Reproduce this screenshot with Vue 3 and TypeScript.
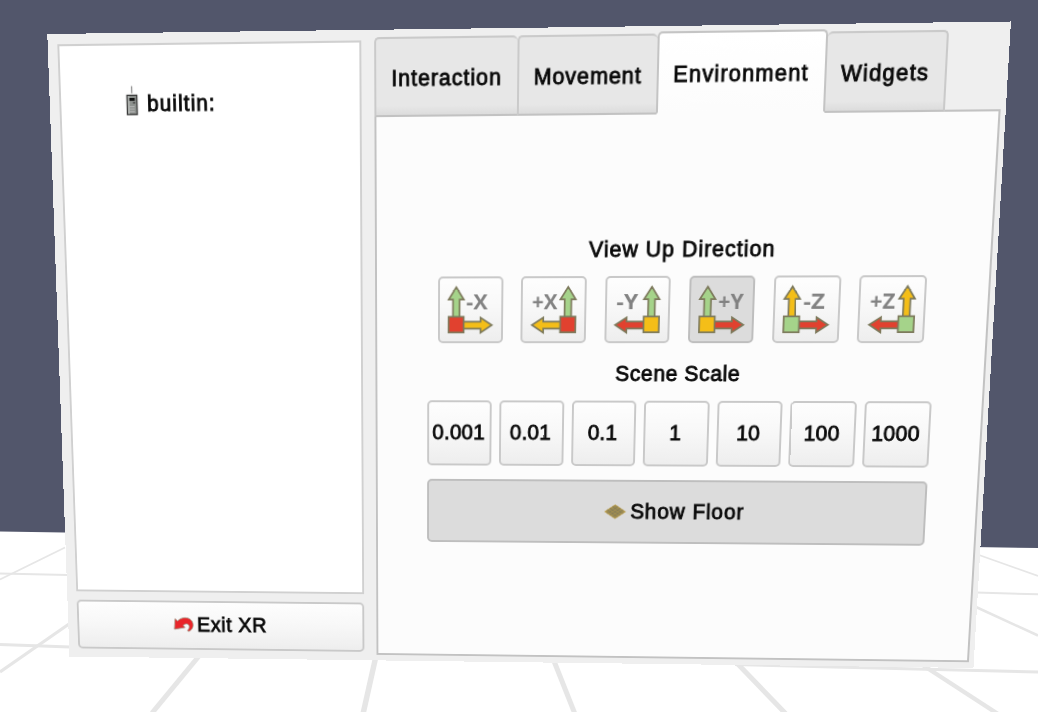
<script setup lang="ts">
import { computed } from 'vue'

type Point = [number, number]

interface Tab {
  name: string
  cls: string
}

interface AxisButton {
  label: string
  up: string
  side: string
  origin: string
  mirrored: boolean
  x: number
  len: number
}

const W = 960
const H = 640

// Projected corners of the floating panel: top-left, top-right, bottom-right, bottom-left
const corners: Point[] = [
  [47.3, 34],
  [1011, 21.5],
  [973.5, 668],
  [69.5, 656.5],
]

const panelStyle = computed(() => {
  const [[x0, y0], [x1, y1], [x2, y2], [x3, y3]] = corners
  const dx1 = x1 - x2
  const dx2 = x3 - x2
  const dx3 = x0 - x1 + x2 - x3
  const dy1 = y1 - y2
  const dy2 = y3 - y2
  const dy3 = y0 - y1 + y2 - y3
  const det = dx1 * dy2 - dx2 * dy1
  const g = (dx3 * dy2 - dx2 * dy3) / det
  const h = (dx1 * dy3 - dx3 * dy1) / det
  const m = [
    (x1 - x0 + g * x1) / W, (y1 - y0 + g * y1) / W, 0, g / W,
    (x3 - x0 + h * x3) / H, (y3 - y0 + h * y3) / H, 0, h / H,
    0, 0, 1, 0,
    x0, y0, 0, 1,
  ]
  return {
    width: `${W}px`,
    height: `${H}px`,
    transform: `matrix3d(${m.map((v) => v.toFixed(9)).join(',')})`,
  }
})

const tabs: Tab[] = [
  { name: 'Interaction', cls: 'interaction' },
  { name: 'Movement', cls: 'movement' },
  { name: 'Environment', cls: 'environment active' },
  { name: 'Widgets', cls: 'widgets' },
]

const red = '#e1412f'
const green = '#a5d38a'
const yellow = '#f4be18'

const axes: AxisButton[] = [
  { label: '-X', up: green, side: yellow, origin: red, mirrored: false, x: 29, len: 22 },
  { label: '+X', up: green, side: yellow, origin: red, mirrored: true, x: 10.5, len: 26 },
  { label: '-Y', up: green, side: red, origin: yellow, mirrored: true, x: 11.5, len: 22 },
  { label: '+Y', up: green, side: red, origin: yellow, mirrored: false, x: 29.5, len: 25.5 },
  { label: '-Z', up: yellow, side: red, origin: green, mirrored: false, x: 30, len: 21.5 },
  { label: '+Z', up: yellow, side: red, origin: green, mirrored: true, x: 10.5, len: 25 },
]
const activeAxis = '+Y'

const scales: string[] = ['0.001', '0.01', '0.1', '1', '10', '100', '1000']
</script>

<template>
  <main class="scene">
    <svg class="floor" viewBox="0 0 1038 712" width="1038" height="712">
      <polygon points="0,531.5 1038,548 1038,712 0,712" fill="#ffffff" />
      <g stroke="#e6e6e6" fill="none">
        <path d="M0 579.5L65 547.5" stroke-width="1.7" />
        <path d="M0 573.5L68 575" stroke-width="2" />
        <path d="M0 644.5L70 647" stroke-width="3" />
        <path d="M0 672L69 624" stroke-width="3.2" />
        <path d="M199 656L152 713" stroke-width="5" />
        <path d="M376 656L363 714" stroke-width="5.5" />
        <path d="M552 656L575 714" stroke-width="5" />
        <path d="M733 659L786 714" stroke-width="5" />
        <path d="M921 664L998 714" stroke-width="4.3" />
        <path d="M735 664.5L1038 672" stroke-width="3" />
        <path d="M976 592.5L1038 594.3" stroke-width="2" />
        <path d="M979 555L1038 576" stroke-width="1.7" />
        <path d="M976 607L1038 635.5" stroke-width="2.5" />
      </g>
    </svg>

    <section class="panel" :style="panelStyle">
      <aside class="left">
        <div class="devices">
          <svg class="device" viewBox="0 0 13 30" width="13" height="30">
            <path d="M6.5 -1.5V5.5" stroke="#8c8c8c" stroke-width="1.3" />
            <rect x="1.4" y="7.4" width="10.2" height="18.8" fill="#8e928f" stroke="#3a3a3a" stroke-width="1.3" />
            <rect x="2.3" y="8.2" width="1.6" height="17.2" fill="#b5b9b6" />
            <rect x="3.8" y="10" width="5.6" height="2.8" fill="#111" />
            <rect x="7.6" y="13.8" width="2" height="1.8" fill="#444" />
            <path d="M4 18.5h5M4 21h5M4 23.5h5" stroke="#b4b4b4" stroke-width="1" />
          </svg>
          <span class="text builtin">builtin:</span>
        </div>
        <button class="btn exit">
          <svg viewBox="0 0 22 18" width="22" height="18">
            <path
              d="M1.9 2.6L4.6 5C7.4 1.8 12.2.6 16.2 1.9C20.4 3.4 22.2 8 20.7 11.8C19.8 14 18.2 15.5 16.2 16.1L15 15.2C17 13.6 17.8 11.2 16.7 9.3C15.4 7.4 12.6 7.4 10.4 9.6L12.4 11.9L.9 13.9Z"
              fill="#e9252a" stroke="#a08c7c" stroke-width="0.9" stroke-linejoin="round"
            />
          </svg>
          <span class="text exit-text">Exit XR</span>
        </button>
      </aside>

      <section class="right">
        <nav class="tabs">
          <button v-for="tab in tabs" :key="tab.name" class="tab" :class="tab.cls">
            <span class="text">{{ tab.name }}</span>
          </button>
        </nav>
        <div class="pane">
          <h2 class="text heading up">View Up Direction</h2>
          <div class="row axes">
            <button
              v-for="axis in axes" :key="axis.label"
              class="btn square" :class="{ pressed: axis.label === activeAxis }"
            >
              <svg viewBox="0 0 66 66" width="66" height="66">
                <g
                  stroke="#7d7a5c" stroke-width="1.7"
                  :transform="axis.mirrored ? 'translate(66 0) scale(-1 1)' : undefined"
                >
                  <path d="M18.7 9.8L26.6 22.2H22.2V40H15.4V22.2H10.9Z" :fill="axis.up" />
                  <path d="M55.4 47.8L43.8 55.4V51.4H26V44.3H43.8V40.2Z" :fill="axis.side" />
                  <rect x="10.9" y="39.4" width="15.6" height="15.8" :fill="axis.origin" />
                </g>
                <text
                  class="axis-label" :x="axis.x" y="32" :textLength="axis.len"
                  lengthAdjust="spacingAndGlyphs"
                >{{ axis.label }}</text>
              </svg>
            </button>
          </div>
          <h2 class="text heading scale">Scene Scale</h2>
          <div class="row scales">
            <button v-for="s in scales" :key="s" class="btn square">
              <span class="text number">{{ s }}</span>
            </button>
          </div>
          <button class="btn pressed show-floor">
            <svg viewBox="0 0 23 16" width="23" height="16">
              <path d="M11.5.8L22.3 8L11.5 15.2L.7 8Z" fill="#a08d50" stroke="#c2a659" stroke-width="0.9" />
              <path
                d="M8.8 2.6L19.6 9.8M6.1 4.4L16.9 11.6M3.4 6.2L14.2 13.4M14.2 2.6L3.4 9.8M16.9 4.4L6.1 11.6M19.6 6.2L8.8 13.4"
                stroke="#77755d" stroke-width="0.8" stroke-dasharray="2 1"
              />
            </svg>
            <span class="text floor-text">Show Floor</span>
          </button>
        </div>
      </section>
    </section>
  </main>
</template>

<style>
html,
body {
  margin: 0;
  overflow: hidden;
}
</style>

<style scoped>
.scene {
  position: relative;
  width: 1038px;
  height: 712px;
  overflow: hidden;
  background: #52566b;
  font-family: "Liberation Sans", Arial, sans-serif;
}

.scene * {
  box-sizing: border-box;
}

svg {
  display: block;
  flex: none;
  overflow: visible;
}

.floor {
  position: absolute;
  inset: 0;
}

.panel {
  position: absolute;
  top: 0;
  left: 0;
  transform-origin: 0 0;
  display: flex;
  gap: 13px;
  padding: 5px 5px 6px 10px;
  background: #efefef;
}

.text {
  color: #0a0a0a;
  font-size: 21.5px;
  line-height: 26px;
  font-weight: 400;
  letter-spacing: 0.9px;
  white-space: nowrap;
  -webkit-text-stroke: 0.85px #0a0a0a;
}

.left {
  width: 311px;
  flex: none;
  display: flex;
  flex-direction: column;
  gap: 9px;
  padding: 5px 0 3px;
}

.devices {
  flex: 1;
  display: flex;
  align-items: flex-start;
  gap: 9px;
  padding: 41px 0 0 67px;
  background: #fff;
  border: 2px solid #d0d0d0;
}

.builtin {
  margin-top: 3px;
  letter-spacing: 1.1px;
}

.btn {
  display: flex;
  align-items: center;
  justify-content: center;
  margin: 0;
  padding: 0;
  font-family: inherit;
  background: linear-gradient(#fefefe, #f8f8f8 45%, #ededed) border-box;
  border: 2px solid #c9c9c9;
  border-radius: 5px;
}

.btn.pressed {
  background: #dcdcdc;
  border-color: #bebebe;
}

.exit {
  height: 53px;
  gap: 4px;
  padding-bottom: 1px;
}

.exit-text {
  letter-spacing: 0.6px;
}

.right {
  flex: 1;
  display: flex;
  flex-direction: column;
}

.tabs {
  display: flex;
  align-items: flex-end;
  height: 79px;
  margin-bottom: -2px;
  z-index: 1;
}

.tab {
  display: flex;
  align-items: center;
  justify-content: center;
  height: 77px;
  margin: 0;
  padding: 3px 0 0;
  font-family: inherit;
  background: linear-gradient(#e7e7e7 88%, #dcdcdc);
  border: 2px solid #cacaca;
  border-bottom-color: #c2c2c2;
  border-radius: 5px 5px 0 0;
}

.interaction {
  width: 144px;
  border-right: 0;
}

.interaction .text {
  letter-spacing: 1px;
}

.movement {
  width: 138.5px;
  border-right: 0;
}

.environment {
  width: 167px;
}

.environment .text {
  letter-spacing: 1.15px;
}

.widgets {
  width: 117px;
  border-left: 0;
}

.widgets .text {
  letter-spacing: 1.2px;
}

.tab.active {
  height: 79px;
  padding-bottom: 1px;
  background: linear-gradient(#ffffff, #fcfcfc);
  border-color: #c4c4c4 #c4c4c4 #fcfcfc;
}

.pane {
  flex: 1;
  display: flex;
  flex-direction: column;
  align-items: center;
  padding: 118px 0 0 2px;
  background: #fcfcfc;
  border: 2px solid #c2c2c2;
}

.heading {
  margin: 0;
}

.up {
  letter-spacing: 1px;
  margin: 0 0 13px 2px;
}

.row {
  display: flex;
}

.axes {
  gap: 18.8px;
}

.square {
  width: 66.5px;
  height: 67px;
}

.axis-label {
  font-family: "Open Sans", sans-serif;
  font-size: 21px;
  font-weight: 700;
  fill: #828282;
}

.scale {
  margin: 18px 0 14px;
  letter-spacing: 0.6px;
}

.scales {
  gap: 8.1px;
}

.number {
  letter-spacing: 0.2px;
  margin: 0 2px 2px 0;
}

.show-floor {
  width: 515px;
  height: 66px;
  margin-top: 14px;
  gap: 4px;
}
</style>
